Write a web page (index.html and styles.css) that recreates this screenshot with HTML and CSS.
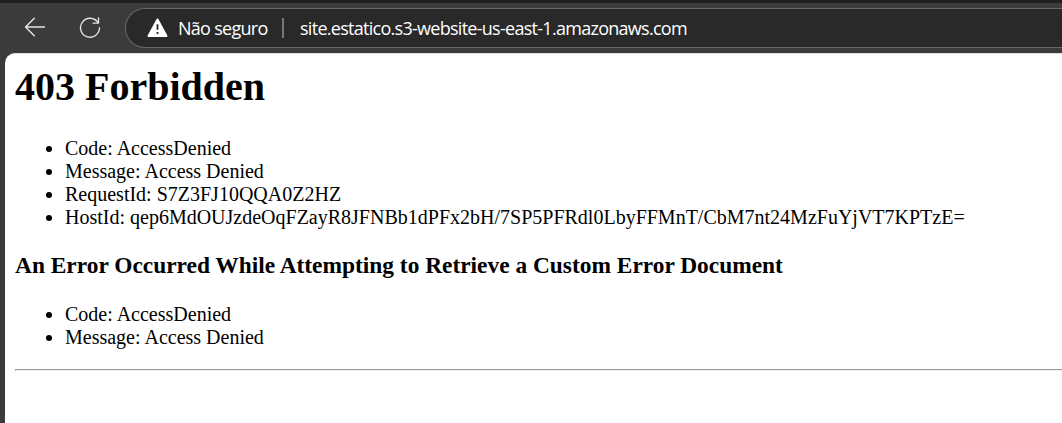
FILE: index.html
```html
<!DOCTYPE html>
<html lang="pt-BR">
<head>
<meta charset="utf-8">
<title>403 Forbidden</title>
<link rel="stylesheet" href="styles.css">
</head>
<body>
<div class="browser">
  <header class="toolbar">
    <svg class="back" width="22" height="20" viewBox="0 0 22 20"><path d="M20.5 10H1.5M10.3 1.2 1.5 10l8.8 8.8"/></svg>
    <svg class="reload" width="22" height="22" viewBox="0 0 22 22"><path d="M19 5.6A9.5 9.5 0 1 0 20.5 10.8M19.5 .9v5.2H14"/></svg>
    <div class="address">
      <svg class="warning" width="21" height="20" viewBox="0 0 21 20"><path class="shape" d="M10.5 1.5 19.5 18H1.5Z"/><path class="mark" d="M10.5 6.2v5.6M10.5 14v2"/></svg>
      <span class="status">Não seguro</span>
      <span class="divider"></span>
      <span class="url">site.estatico.s3-website-us-east-1.amazonaws.com</span>
    </div>
  </header>
  <main class="page">
    <h1>403 Forbidden</h1>
    <ul>
      <li>Code: AccessDenied</li>
      <li>Message: Access Denied</li>
      <li>RequestId: S7Z3FJ10QQA0Z2HZ</li>
      <li>HostId: qep6MdOUJzdeOqFZayR8JFNBb1dPFx2bH/7SP5PFRdl0LbyFFMnT/CbM7nt24MzFuYjVT7KPTzE=</li>
    </ul>
    <h3>An Error Occurred While Attempting to Retrieve a Custom Error Document</h3>
    <ul>
      <li>Code: AccessDenied</li>
      <li>Message: Access Denied</li>
    </ul>
    <hr>
  </main>
</div>
</body>
</html>
```
FILE: styles.css
```css
* { box-sizing: border-box; }
body { margin: 0; overflow: hidden; background: #3b3b3b; }
.browser {
  height: 423px;
  display: flex;
  flex-direction: column;
  border-top: 3px solid #202020;
  background: #3b3b3b;
}
.toolbar {
  height: 50px;
  flex: none;
  display: flex;
  align-items: flex-start;
  padding: 5px 0 0 24px;
}
.back, .reload { fill: none; stroke: #e6e6e6; stroke-width: 1.35; stroke-linecap: round; stroke-linejoin: round; }
.back { margin-top: 9px; }
.reload { margin: 9px 0 0 33px; }
.address {
  flex: 1;
  height: 40px;
  margin-left: 24px;
  display: flex;
  align-items: center;
  padding-left: 21px;
  border: 1px solid #686868;
  border-right: 0;
  border-radius: 20px 0 0 20px;
  background: #292929;
  color: #fff;
  font: 18px/24px "Open Sans", "Noto Sans", sans-serif;
  white-space: nowrap;
}
.warning .shape { fill: #fff; stroke: #fff; stroke-width: 2; stroke-linejoin: round; }
.warning .mark { stroke: #292929; stroke-width: 1.8; }
.status { margin-left: 10px; width: 91px; letter-spacing: -.72px; }
.divider { width: 2px; height: 20px; margin-left: 13px; background: #777; }
.url { margin-left: 16px; letter-spacing: -.72px; }
.page {
  flex: 1;
  margin-left: 5px;
  padding: 10px 0 0 10px;
  border-top: 1px solid #ddd;
  border-radius: 10px 0 0 0;
  background: #fff;
  color: #000;
  font: 20px/23px "Liberation Serif", "Times New Roman", serif;
}
h1 { margin: 0 0 27px; font-size: 40px; line-height: 46px; }
ul { margin: 0; padding-left: 50px; }
h3 { margin: 23px 0 24px; font-size: 23.4px; line-height: 27px; }
hr { margin: 20px 0 0; height: 2px; border: 1px solid #9a9a9a; border-right: 0; border-bottom-color: #eee; }
```
